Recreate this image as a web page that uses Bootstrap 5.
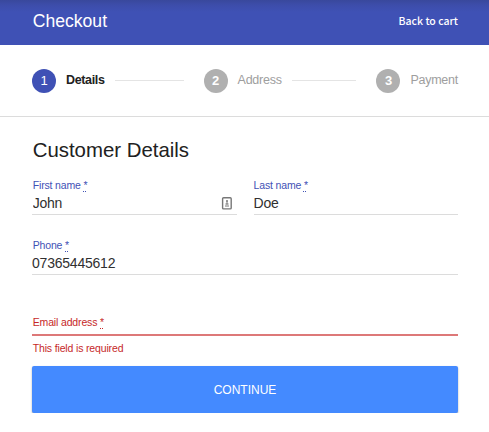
<!DOCTYPE html>
<html lang="en">
<head>
<meta charset="utf-8">
<meta name="viewport" content="width=device-width, initial-scale=1">
<title>Checkout</title>
<link href="https://cdn.jsdelivr.net/npm/bootstrap@5.3.0/dist/css/bootstrap.min.css" rel="stylesheet">
<style>
body { font-family: "Liberation Sans", Arial, sans-serif; color: #212121; background: #fff; overflow: hidden; }
.gutter { padding-left: 32px; padding-right: 31px; }
.topbar { height: 45px; background: linear-gradient(#39489c 0, #3d4daa 5px, #3f51b5 12px); color: #fff; }
.topbar-title { font-size: 17.6px; line-height: 20px; font-weight: 400; margin-top: -3px; }
.cart-link { font: 500 10.5px/16px "Noto Sans CJK SC", sans-serif; color: #fff; margin-top: -3px; }
.steps { height: 72px; border-bottom: 1px solid #dcdcdc; font-size: 12.5px; letter-spacing: -.25px; color: #9e9e9e; }
.step-dot { width: 24px; height: 24px; background: #b0b0b0; color: #fff; font-size: 13px; margin-right: 10px; }
.step-on { color: #212121; letter-spacing: -.35px; }
.step-on .step-dot { background: #3f51b5; font-weight: 400; }
.step-line { height: 1px; background: #e4e4e4; margin: 0 20px 0 10px; }
.step-line-first { width: 69px; }
.section-title { font-size: 20.4px; line-height: 26px; font-weight: 400; margin: 20px 0 16px; }
.names { column-gap: 17px; }
.field { height: 36px; border-bottom: 1px solid #dcdcdc; color: #3f51b5; }
.field label { font-size: 10.5px; letter-spacing: -.15px; line-height: 12px; }
.field abbr { cursor: default; text-decoration: underline dotted 1px; text-underline-offset: 2px; }
.field input { font-size: 14px; letter-spacing: -.22px; line-height: 22px; height: 22px; margin-top: 1px; color: #303030; outline: 0; min-width: 0; }
.field-phone { margin-top: 24px; }
.field-error { height: 20px; margin-top: 41px; border-bottom: 2px solid #dd7878; color: #c62828; }
.error-text { font-size: 10.5px; letter-spacing: -.15px; line-height: 12px; color: #c62828; margin: 6px 0 12px; }
.continue, .continue:hover { height: 47px; background: #448aff; color: #fff; border: 0; border-radius: 2px; font-size: 12px; box-shadow: 0 1px 2px rgba(0,0,0,.35); }
.indent { padding-left: .7px; }
</style>
</head>
<body>
<header class="topbar gutter d-flex align-items-center justify-content-between">
  <h1 class="topbar-title indent mb-0">Checkout</h1>
  <a class="cart-link text-decoration-none" href="#">Back to cart</a>
</header>
<nav class="steps gutter d-flex align-items-center">
  <div class="step-on d-flex align-items-center fw-bold"><span class="step-dot rounded-circle d-flex align-items-center justify-content-center">1</span>Details</div>
  <div class="step-line step-line-first flex-shrink-0"></div>
  <div class="d-flex align-items-center"><span class="step-dot rounded-circle d-flex align-items-center justify-content-center fw-bold">2</span>Address</div>
  <div class="step-line flex-fill"></div>
  <div class="d-flex align-items-center"><span class="step-dot rounded-circle d-flex align-items-center justify-content-center fw-bold">3</span>Payment</div>
</nav>
<main class="gutter">
  <h2 class="section-title indent">Customer Details</h2>
  <form>
    <div class="names d-flex">
      <div class="field d-flex flex-column flex-fill w-50">
        <label class="indent" for="first">First name <abbr title="required">*</abbr></label>
        <div class="indent d-flex align-items-center">
          <input id="first" class="border-0 bg-transparent p-0 flex-fill" value="John">
          <svg class="me-1" width="12" height="14" viewBox="0 0 12 14" fill="none" stroke="#777" aria-hidden="true">
            <rect x="1.6" y="1.7" width="8.6" height="11.2" rx="1" stroke-width="1.4"/>
            <circle cx="6" cy="5.1" r="1" fill="#777" stroke="none"/>
            <path d="M6 5.5v3M4.4 8h3.2M4 10h4" stroke-width="1"/>
          </svg>
        </div>
      </div>
      <div class="field d-flex flex-column flex-fill w-50">
        <label for="last">Last name <abbr title="required">*</abbr></label>
        <input id="last" class="border-0 bg-transparent p-0 w-100" value="Doe">
      </div>
    </div>
    <div class="field field-phone d-flex flex-column">
      <label class="indent" for="phone">Phone <abbr title="required">*</abbr></label>
      <input id="phone" class="border-0 bg-transparent p-0 w-100" value="07365445612">
    </div>
    <div class="field field-error d-flex">
      <label class="indent" for="email">Email address <abbr title="required">*</abbr></label>
      <input id="email" class="border-0 bg-transparent p-0 flex-fill">
    </div>
    <div class="error-text indent">This field is required</div>
    <button type="button" class="continue btn w-100 p-0">CONTINUE</button>
  </form>
</main>
<script src="https://cdn.jsdelivr.net/npm/bootstrap@5.3.0/dist/js/bootstrap.bundle.min.js"></script>
</body>
</html>
